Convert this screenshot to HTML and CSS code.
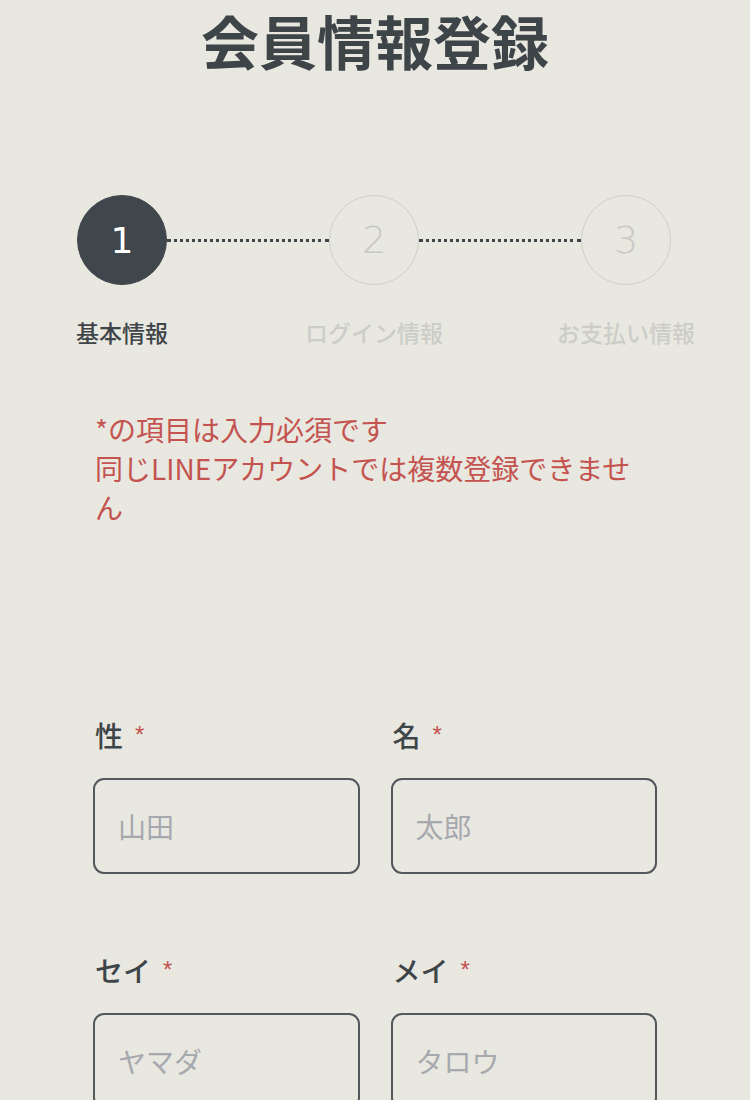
FILE: index.html
```html
<!DOCTYPE html>
<html lang="ja">
<head>
<meta charset="utf-8">
<title>会員情報登録</title>
<link rel="stylesheet" href="styles.css">
</head>
<body>
<main class="page">
  <h1 class="title">会員情報登録</h1>

  <ol class="stepper">
    <li class="step step--active">
      <span class="step__circle">1</span>
      <span class="step__label">基本情報</span>
    </li>
    <li class="step__line"></li>
    <li class="step">
      <span class="step__circle">2</span>
      <span class="step__label">ログイン情報</span>
    </li>
    <li class="step__line"></li>
    <li class="step">
      <span class="step__circle">3</span>
      <span class="step__label">お支払い情報</span>
    </li>
  </ol>

  <div class="notes">
    <p>*の項目は入力必須です</p>
    <p>同じLINEアカウントでは複数登録できません</p>
  </div>

  <form class="form">
    <div class="field">
      <label class="field__label">性<span class="req">*</span></label>
      <input class="field__input" type="text" placeholder="山田">
    </div>
    <div class="field">
      <label class="field__label">名<span class="req">*</span></label>
      <input class="field__input" type="text" placeholder="太郎">
    </div>
    <div class="field">
      <label class="field__label">セイ<span class="req">*</span></label>
      <input class="field__input" type="text" placeholder="ヤマダ">
    </div>
    <div class="field">
      <label class="field__label">メイ<span class="req">*</span></label>
      <input class="field__input" type="text" placeholder="タロウ">
    </div>
  </form>
</main>
</body>
</html>
```

FILE: styles.css
```css
* { box-sizing: border-box; }

html, body {
  margin: 0;
  padding: 0;
  background: #e8e7e0;
}

body {
  font-family: "Noto Sans CJK JP", "Noto Sans", sans-serif;
  color: #3e4549;
}

.page {
  padding: 0 93px;
  overflow: hidden;
}

.title {
  margin: 0;
  font-size: 58px;
  line-height: 80px;
  font-weight: 700;
  text-align: center;
  color: #3e4549;
}

.stepper {
  list-style: none;
  margin: 115px -14px 0 -16px;
  padding: 0;
  display: flex;
  align-items: flex-start;
}

.step {
  width: 90px;
  flex: 0 0 90px;
  display: flex;
  flex-direction: column;
  align-items: center;
}

.step__circle {
  width: 90px;
  height: 90px;
  border-radius: 50%;
  border: 1.5px solid #cfcfca;
  display: flex;
  align-items: center;
  justify-content: center;
  font-family: "DejaVu Sans", sans-serif;
  font-size: 38px;
  font-weight: 200;
  color: #c9c9c4;
}

.step--active .step__circle {
  background: #40474c;
  border-color: #40474c;
  color: #ffffff;
  font-weight: 400;
  font-size: 36px;
}

.step__label {
  margin-top: 31px;
  white-space: nowrap;
  font-size: 23px;
  line-height: 32px;
  font-weight: 500;
  color: #cdcdc8;
}

.step--active .step__label {
  color: #3e4549;
}

.step__line {
  flex: 1;
  margin-top: 44px;
  border-top: 3px dotted #3e4549;
}

.notes {
  margin-top: 62px;
  max-width: 560px;
  color: #c4534f;
  font-size: 28px;
  line-height: 39px;
}

.notes p {
  margin: 0;
  padding-left: 2px;
}

.form {
  margin-top: 188px;
  display: grid;
  grid-template-columns: 1fr 1fr;
  column-gap: 31px;
  row-gap: 76px;
}

.field {
  display: flex;
  flex-direction: column;
}

.field__label {
  padding-left: 2px;
  font-size: 28px;
  line-height: 40px;
  font-weight: 500;
  color: #3e4549;
}

.req {
  margin-left: 12px;
  color: #c4534f;
  font-family: "Liberation Sans", sans-serif;
  font-size: 24px;
  vertical-align: 4px;
}

.field__input {
  margin-top: 23px;
  height: 96px;
  width: 100%;
  border: 2px solid #52585c;
  border-radius: 11px;
  background: transparent;
  padding: 0 23px;
  font-family: "Noto Sans CJK JP", "Noto Sans", sans-serif;
  font-size: 28px;
  color: #3e4549;
  outline: none;
}

.field__input::placeholder {
  color: #a6a9ae;
}
```
